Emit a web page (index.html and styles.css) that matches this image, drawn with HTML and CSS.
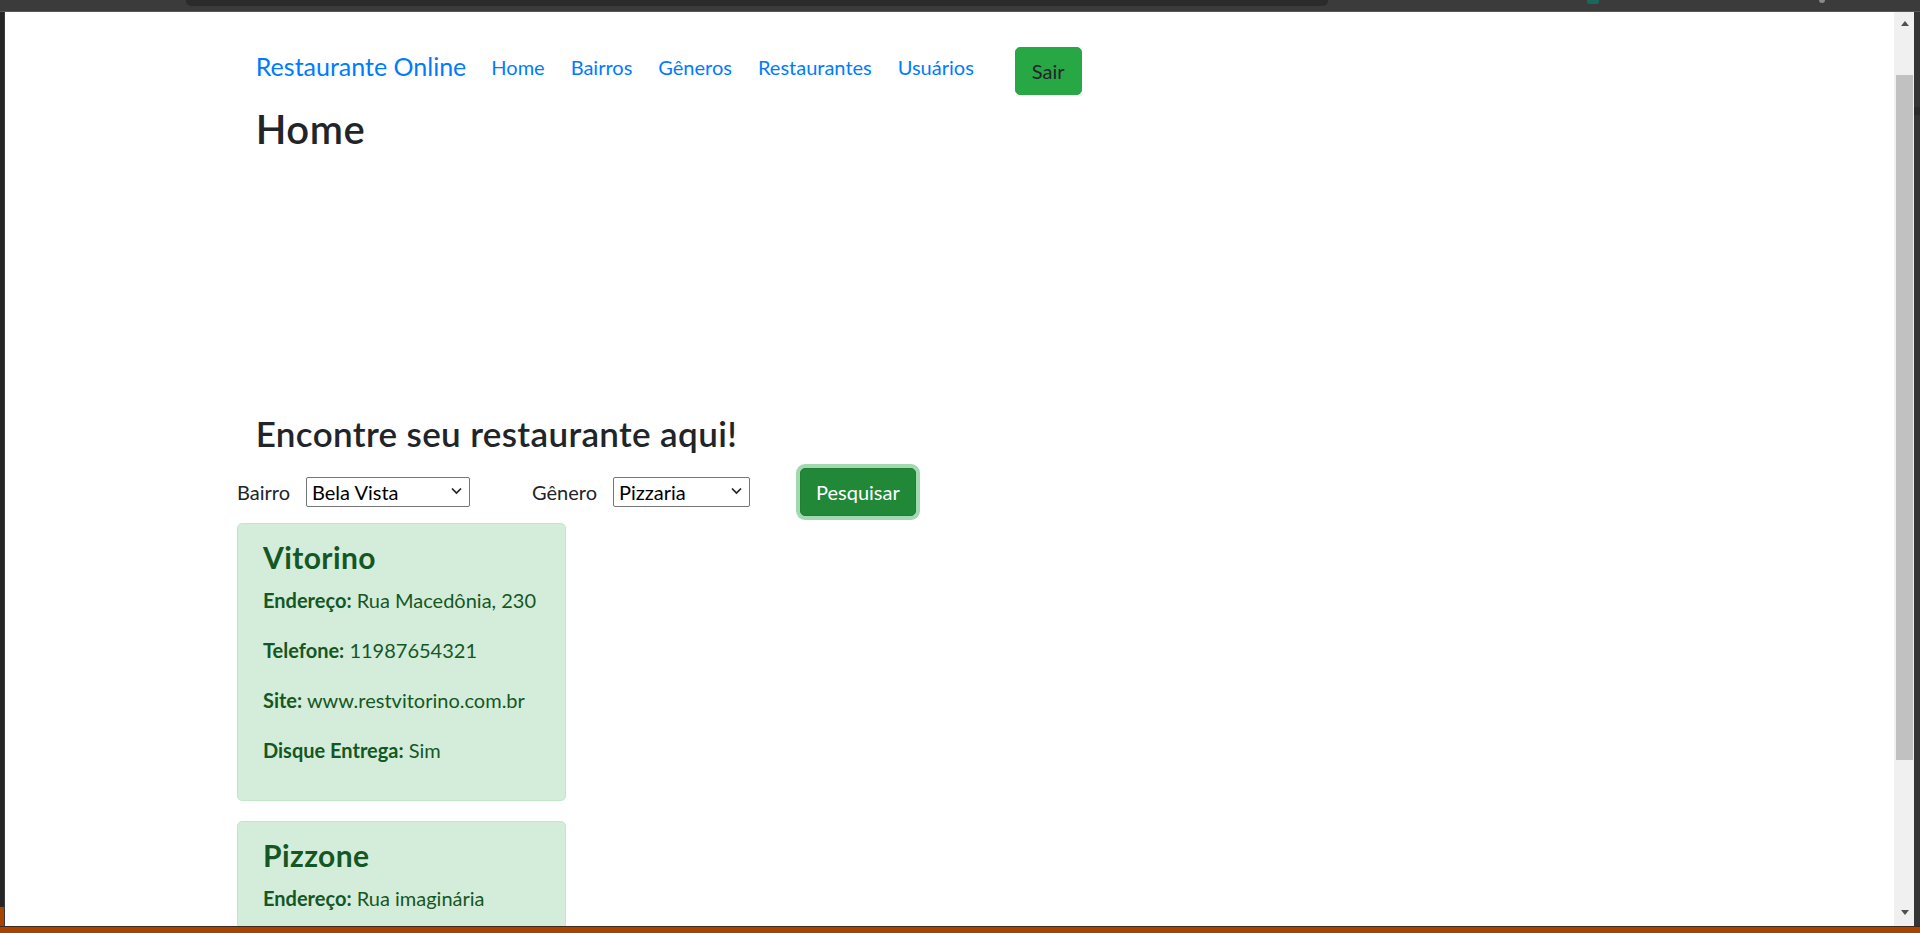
FILE: index.html
```html
<!DOCTYPE html>
<html lang="pt-BR">
<head>
<meta charset="utf-8">
<title>Restaurante Online</title>
<link rel="stylesheet" href="styles.css">
</head>
<body>
<div class="window">
  <div class="chrome-top">
    <div class="urlbar"></div>
    <div class="tab-mark"></div>
    <div class="tab-mark-grey"></div>
  </div>
  <div class="window-body">
    <div class="edge-left"></div>
    <div class="viewport">
      <div class="container">
        <nav class="navbar">
          <a class="brand" href="#">Restaurante Online</a>
          <ul class="nav-links">
            <li><a class="nav-link" href="#">Home</a></li>
            <li><a class="nav-link" href="#">Bairros</a></li>
            <li><a class="nav-link" href="#">Gêneros</a></li>
            <li><a class="nav-link" href="#">Restaurantes</a></li>
            <li><a class="nav-link" href="#">Usuários</a></li>
          </ul>
          <button class="btn-sair" type="button">Sair</button>
        </nav>
        <h2 class="page-title">Home</h2>
        <div class="hero-space"></div>
        <h3 class="search-title">Encontre seu restaurante aqui!</h3>
        <form class="search-row">
          <label class="field-label label-bairro" for="bairro">Bairro</label>
          <div class="select-wrap select-bairro">
            <select id="bairro" class="field-select">
              <option>Bela Vista</option>
            </select>
            <svg class="chev" width="11" height="8" viewBox="0 0 11 8"><path d="M1 1.5 L5.5 6 L10 1.5" fill="none" stroke="#222" stroke-width="1.7"/></svg>
          </div>
          <label class="field-label label-genero" for="genero">Gênero</label>
          <div class="select-wrap select-genero">
            <select id="genero" class="field-select">
              <option>Pizzaria</option>
            </select>
            <svg class="chev" width="11" height="8" viewBox="0 0 11 8"><path d="M1 1.5 L5.5 6 L10 1.5" fill="none" stroke="#222" stroke-width="1.7"/></svg>
          </div>
          <button class="btn-pesquisar" type="button">Pesquisar</button>
        </form>
        <div class="results">
          <div class="result-card">
            <h4 class="result-name">Vitorino</h4>
            <p class="result-line"><strong>Endereço:</strong> Rua Macedônia, 230</p>
            <p class="result-line"><strong>Telefone:</strong> 11987654321</p>
            <p class="result-line"><strong>Site:</strong> www.restvitorino.com.br</p>
            <p class="result-line"><strong>Disque Entrega:</strong> Sim</p>
          </div>
          <div class="result-card">
            <h4 class="result-name">Pizzone</h4>
            <p class="result-line"><strong>Endereço:</strong> Rua imaginária</p>
          </div>
        </div>
      </div>
    </div>
    <div class="scrollbar">
      <div class="scroll-arrow up"></div>
      <div class="scroll-track"><div class="scroll-thumb"></div></div>
      <div class="scroll-arrow down"></div>
    </div>
    <div class="edge-right"></div>
  </div>
  <div class="taskbar"></div>
</div>
</body>
</html>
```

FILE: styles.css
```css
* { box-sizing: border-box; }

html, body {
  margin: 0;
  padding: 0;
  height: 933px;
  overflow: hidden;
  background: #2a2a2a;
}

body {
  font-family: "Lato", "Liberation Sans", sans-serif;
  color: #212529;
}

.window {
  width: 1920px;
  height: 933px;
  display: flex;
  flex-direction: column;
}

/* ---------- browser chrome ---------- */
.chrome-top {
  position: relative;
  height: 12px;
  flex: none;
  background: #3b3b3b;
  border-bottom: 1px solid #575757;
}
.urlbar {
  position: absolute;
  left: 186px;
  top: 0;
  width: 1142px;
  height: 6px;
  background: #2b2b2b;
  border-radius: 0 0 5px 5px;
}
.tab-mark {
  position: absolute;
  left: 1587px;
  top: 0;
  width: 12px;
  height: 4px;
  background: #17695c;
  border-radius: 0 0 2px 2px;
}
.tab-mark-grey {
  position: absolute;
  left: 1819px;
  top: 0;
  width: 6px;
  height: 3px;
  background: #8a8a8a;
  border-radius: 0 0 3px 3px;
}

.window-body {
  flex: 1;
  display: flex;
  min-height: 0;
}
.edge-left {
  width: 5px;
  flex: none;
  background: linear-gradient(#252525 895px, #a94400 895px);
  border-right: 1px solid #3a3a3a;
}
.viewport {
  width: 1889px;
  flex: none;
  background: #ffffff;
  overflow: hidden;
}
.scrollbar {
  width: 20px;
  flex: none;
  background: #f0f0f0;
  display: flex;
  flex-direction: column;
  padding: 0 1px 0 2px;
}
.scroll-arrow {
  height: 17px;
  flex: none;
  display: flex;
  justify-content: center;
}
.scroll-arrow.up { align-items: flex-end; padding-bottom: 3px; }
.scroll-arrow.down { align-items: flex-start; padding-top: 1px; }
.scroll-arrow.up::before {
  content: "";
  border-left: 4.5px solid transparent;
  border-right: 4.5px solid transparent;
  border-bottom: 5px solid #505050;
}
.scroll-arrow.down::before {
  content: "";
  border-left: 4.5px solid transparent;
  border-right: 4.5px solid transparent;
  border-top: 5px solid #505050;
}
.scroll-track {
  flex: 1;
  padding-top: 46px;
}
.scroll-thumb {
  height: 685px;
  background: #c1c1c1;
}
.edge-right {
  width: 6px;
  flex: none;
  background: linear-gradient(#353535 0, #353535 95px, #2c2c2c 95px, #2c2c2c 103px, #353535 103px);
}
.taskbar {
  height: 7px;
  flex: none;
  background: #a94400;
  border-top: 1px solid #3a2a20;
}

/* ---------- page ---------- */
.container {
  width: 1425px;
  margin: 0 auto;
  padding: 0 18.75px;
}

.navbar {
  display: flex;
  align-items: center;
  padding: 27px 0 10px;
}
.brand {
  font-size: 25px;
  line-height: 37.5px;
  padding: 6.25px 0;
  margin-right: 12px;
  color: #007bff;
  text-decoration: none;
  white-space: nowrap;
}
.nav-links {
  display: flex;
  list-style: none;
  margin: 0;
  padding: 0;
}
.nav-link {
  display: block;
  font-size: 20px;
  line-height: 30px;
  padding: 10px 13px;
  color: #007bff;
  text-decoration: none;
}
.btn-sair {
  margin: 8px 0 0 28px;
  height: 47.5px;
  padding: 0 16px;
  font-family: inherit;
  font-size: 20px;
  color: #212529;
  background: #28a745;
  border: 1px solid #28a745;
  border-radius: 5px;
}

.page-title {
  margin: 0 0 10px;
  font-size: 40px;
  line-height: 48px;
  font-weight: 600;
  letter-spacing: 0.5px;
}
.hero-space {
  height: 249px;
}
.search-title {
  margin: 0 0 10px;
  font-size: 35px;
  line-height: 42px;
  font-weight: 600;
  letter-spacing: 0.35px;
}

.search-row {
  display: flex;
  align-items: center;
  height: 57px;
  margin: 0 -18.75px 2.5px;
}
.field-label {
  font-size: 20px;
  line-height: 30px;
}
.label-bairro { width: 69px; }
.label-genero { width: 81px; }
.select-wrap {
  position: relative;
  height: 30px;
}
.select-bairro { width: 164px; margin-right: 62px; }
.select-genero { width: 137px; margin-right: 50px; }
.field-select {
  -webkit-appearance: none;
  appearance: none;
  width: 100%;
  height: 30px;
  padding: 0 0 0 5px;
  font-family: inherit;
  font-size: 20px;
  color: #000;
  background: #fff;
  border: 1px solid #767676;
  border-radius: 2px;
}
.chev {
  position: absolute;
  right: 8px;
  top: 10px;
  pointer-events: none;
}
.btn-pesquisar {
  height: 47.5px;
  padding: 0 15px;
  font-family: inherit;
  font-size: 20px;
  color: #fff;
  background: #218838;
  border: 1px solid #1e7e34;
  border-radius: 5px;
  box-shadow: 0 0 0 4px rgba(72, 180, 97, 0.5);
}

.results {
  margin: 0 -18.75px;
}
.result-card {
  width: 329px;
  padding: 15px 25px;
  margin-bottom: 20px;
  background: #d4edda;
  border: 1px solid #c3e6cb;
  border-radius: 5px;
  color: #155724;
}
.result-name {
  margin: 0 0 10px;
  font-size: 30px;
  line-height: 36px;
  font-weight: 700;
  letter-spacing: 0.4px;
}
.result-line {
  margin: 0 0 20px;
  font-size: 20px;
  line-height: 30px;
}
.result-card strong {
  font-weight: 700;
}
```
